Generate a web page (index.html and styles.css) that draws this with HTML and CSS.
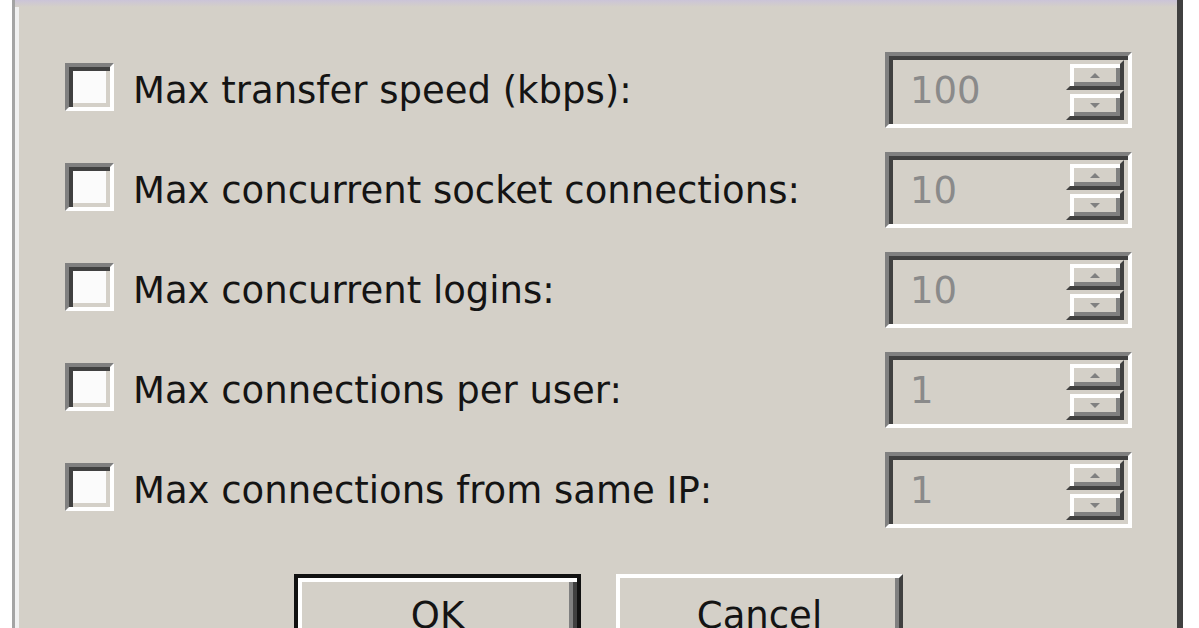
FILE: index.html
```html
<!DOCTYPE html>
<html lang="en">
<head>
    <meta charset="UTF-8">
    <title>Limits</title>
    <link rel="stylesheet" href="styles.css">
</head>
<body>
    <div class="window">
        <div class="title-edge"></div>
        <div class="content">
            <div class="row">
                <span class="check"></span>
                <span class="label">Max transfer speed (kbps):</span>
                <div class="spin">
                    <span class="spin-value">100</span>
                    <div class="spin-buttons">
                        <span class="spin-btn up"></span>
                        <span class="spin-btn down"></span>
                    </div>
                </div>
            </div>
            <div class="row">
                <span class="check"></span>
                <span class="label">Max concurrent socket connections:</span>
                <div class="spin">
                    <span class="spin-value">10</span>
                    <div class="spin-buttons">
                        <span class="spin-btn up"></span>
                        <span class="spin-btn down"></span>
                    </div>
                </div>
            </div>
            <div class="row">
                <span class="check"></span>
                <span class="label">Max concurrent logins:</span>
                <div class="spin">
                    <span class="spin-value">10</span>
                    <div class="spin-buttons">
                        <span class="spin-btn up"></span>
                        <span class="spin-btn down"></span>
                    </div>
                </div>
            </div>
            <div class="row">
                <span class="check"></span>
                <span class="label">Max connections per user:</span>
                <div class="spin">
                    <span class="spin-value">1</span>
                    <div class="spin-buttons">
                        <span class="spin-btn up"></span>
                        <span class="spin-btn down"></span>
                    </div>
                </div>
            </div>
            <div class="row">
                <span class="check"></span>
                <span class="label">Max connections from same IP:</span>
                <div class="spin">
                    <span class="spin-value">1</span>
                    <div class="spin-buttons">
                        <span class="spin-btn up"></span>
                        <span class="spin-btn down"></span>
                    </div>
                </div>
            </div>

            <div class="actions">
                <button class="btn default">OK</button>
                <button class="btn">Cancel</button>
            </div>
        </div>
    </div>
</body>
</html>
```

FILE: styles.css
```css
body {
    margin: 0;
    background: #fff;
    overflow: hidden;
    font-family: "DejaVu Sans", sans-serif;
}

.window {
    margin-left: 12px;
    width: 1162px;
    height: 628px;
    background: #d4d0c8;
    border-left: 3px solid #a4a4a4;
    border-right: 6px solid #404040;
    box-shadow: inset 4px 0 0 #f0f0f0;
}

.title-edge {
    height: 7px;
    background: linear-gradient(#cbc4d8, #d4d0c8);
}

.content {
    padding: 45px 45px 0 50px;
}

.row {
    display: flex;
    align-items: center;
    height: 76px;
    margin-bottom: 24px;
}

/* sunken 3d edge, scaled up classic style */
.check {
    width: 49px;
    height: 48px;
    box-sizing: border-box;
    margin-bottom: 6px;
    background: #fbfbfb;
    border: 4px solid;
    border-color: #808080 #fff #fff #808080;
    box-shadow: inset 4px 4px 0 #404040, inset -4px -4px 0 #d4d0c8;
}

.label {
    margin-left: 19px;
    font-size: 37px;
    color: #141414;
}

.spin {
    margin-left: auto;
    width: 247px;
    height: 76px;
    box-sizing: border-box;
    display: flex;
    align-items: center;
    padding: 4px 4px 4px 21px;
    border: 4px solid;
    border-color: #808080 #fff #fff #808080;
    box-shadow: inset 4px 4px 0 #404040, inset -4px -4px 0 #d4d0c8;
}

.spin-value {
    font-size: 37px;
    color: #8a8a8a;
}

.spin-buttons {
    margin-left: auto;
    display: flex;
    flex-direction: column;
}

.spin-btn {
    width: 58px;
    height: 30px;
    box-sizing: border-box;
    display: flex;
    align-items: center;
    justify-content: center;
    border: 4px solid;
    border-color: #d4d0c8 #404040 #404040 #d4d0c8;
    box-shadow: inset 4px 4px 0 #fff, inset -4px -4px 0 #808080;
}

.spin-btn::after {
    content: "";
    border-left: 5px solid transparent;
    border-right: 5px solid transparent;
}

.spin-btn.up::after {
    border-bottom: 5px solid #808080;
}

.spin-btn.down::after {
    border-top: 5px solid #808080;
}

.actions {
    display: flex;
    justify-content: center;
    gap: 35px;
    margin-top: 46px;
}

.btn {
    width: 287px;
    height: 88px;
    box-sizing: border-box;
    padding: 0 0 6px;
    font-family: "DejaVu Sans", sans-serif;
    font-size: 37px;
    color: #141414;
    background: #d4d0c8;
    border: 4px solid;
    border-color: #fff #404040 #404040 #fff;
    box-shadow: inset -4px -4px 0 #808080;
}

.btn.default {
    border-color: #111;
    box-shadow: inset 4px 4px 0 #fff, inset -4px -4px 0 #404040, inset -8px -8px 0 #808080;
}
```
